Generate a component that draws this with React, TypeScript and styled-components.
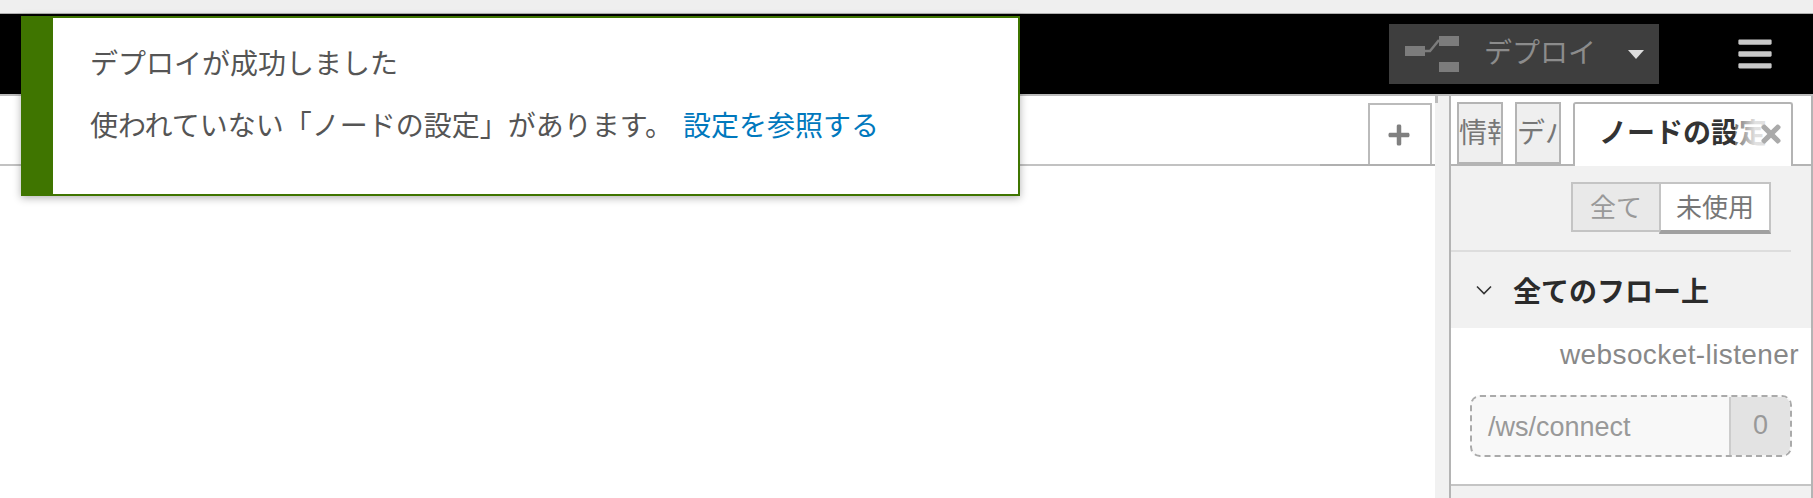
import { createGlobalStyle } from "styled-components";
import styled from "styled-components";
import { FaBars, FaPlus, FaTimes } from "react-icons/fa";

const GlobalStyle = createGlobalStyle`
  html, body {
    margin: 0;
    padding: 0;
    background: #ffffff;
  }
  body {
    font-family: "Liberation Sans", "Noto Sans CJK JP", sans-serif;
    font-size: 28px;
    color: #555555;
  }
  * {
    box-sizing: border-box;
  }
`;

const Page = styled.div`
  position: relative;
  display: flex;
  flex-direction: column;
  width: 1813px;
  height: 498px;
  overflow: hidden;
`;

const TopStrip = styled.div`
  height: 14px;
  flex: none;
  background: #efefef;
  border-bottom: 1px solid #b0b0b0;
`;

const Header = styled.header`
  flex: none;
  display: flex;
  align-items: center;
  justify-content: flex-end;
  height: 82px;
  padding: 0 39px 0 0;
  background: #000000;
  border-bottom: 2px solid #bbbbbb;
`;

const DeployButton = styled.div`
  display: flex;
  align-items: center;
  width: 270px;
  height: 60px;
  margin-right: 77px;
  padding-left: 16px;
  background: #3e3e3e;
  color: #8c8c8c;
  line-height: 60px;
`;

const DeployIcon = styled.svg`
  width: 54px;
  height: 36px;
  margin-right: 25px;
  flex: none;
`;

const DeployLabel = styled.span`
  width: 112px;
  flex: none;
`;

const DeployCaret = styled.span`
  width: 0;
  height: 0;
  margin: 0 0 0 32px;
  border-left: 8px solid transparent;
  border-right: 8px solid transparent;
  border-top: 9px solid #dddddd;
`;

const MenuButton = styled.div`
  display: flex;
  color: #c8c8c8;
  font-size: 38px;
`;

const Main = styled.main`
  flex: 1;
  display: flex;
  min-height: 0;
`;

const Workspace = styled.section`
  flex: none;
  width: 1435px;
`;

const WorkspaceTabs = styled.div`
  display: flex;
  justify-content: flex-end;
  height: 70px;
  padding: 7px 3px 0 0;
  border-bottom: 2px solid;
  border-image: linear-gradient(to right, #c2c2c2 1319px, #b0b0b0 1319px) 1;
`;

const AddTab = styled.div`
  display: flex;
  align-items: center;
  justify-content: center;
  width: 64px;
  padding-right: 2px;
  border: 2px solid #bbbbbb;
  border-bottom: none;
  color: #808080;
  font-size: 24px;
`;

const Gutter = styled.div`
  flex: none;
  width: 14px;
  background: #f1f1f1;
`;

const GutterTop = styled.div`
  height: 7px;
  border-left: 3px solid #bbbbbb;
`;

const Sidebar = styled.aside`
  flex: 1;
  display: flex;
  flex-direction: column;
  border-left: 2px solid #b4b4b4;
  border-right: 2px solid #b4b4b4;
  background: #f1f1f1;
`;

const SidebarTabs = styled.div`
  position: relative;
  display: flex;
  flex: none;
  height: 70px;
  padding: 6px 0 0 6px;
  background: #ffffff;
  border-bottom: 2px solid #b4b4b4;
`;

const SideTab = styled.div<{ $active?: boolean; $width: number }>`
  width: ${(p) => p.$width}px;
  height: ${(p) => (p.$active ? "64px" : "62px")};
  margin-right: 12px;
  padding-left: ${(p) => (p.$active ? "24px" : "0")};
  overflow: hidden;
  white-space: nowrap;
  line-height: 59px;
  border: 2px solid #b4b4b4;
  border-bottom: ${(p) => (p.$active ? "none" : "2px solid #b4b4b4")};
  border-radius: ${(p) => (p.$active ? "3px 3px 0 0" : "0")};
  background: ${(p) => (p.$active ? "#ffffff" : "#efefef")};
  color: ${(p) => (p.$active ? "#333333" : "#777777")};
  font-weight: ${(p) => (p.$active ? 700 : 400)};
`;

const TabClose = styled.div`
  position: absolute;
  top: 22px;
  right: 26px;
  display: flex;
  align-items: center;
  justify-content: flex-end;
  width: 50px;
  height: 32px;
  background: linear-gradient(to right, rgba(255, 255, 255, 0.3), rgba(255, 255, 255, 0.85) 40%);
  color: #aaaaaa;
  font-size: 28px;
`;

const FilterBar = styled.div`
  flex: none;
  display: flex;
  justify-content: flex-end;
  height: 86px;
  margin-right: 20px;
  padding: 16px 20px 0 0;
  border-bottom: 2px solid #dddddd;
`;

const FilterButton = styled.div<{ $selected?: boolean }>`
  display: flex;
  align-items: center;
  justify-content: center;
  height: ${(p) => (p.$selected ? "52px" : "50px")};
  width: ${(p) => (p.$selected ? "112px" : "88px")};
  padding-bottom: 4px;
  font-size: 26px;
  color: ${(p) => (p.$selected ? "#777777" : "#999999")};
  background: ${(p) => (p.$selected ? "#ffffff" : "#e9e9e9")};
  border: 2px solid #c4c4c4;
  border-right-width: ${(p) => (p.$selected ? "2px" : "0")};
  border-bottom: ${(p) => (p.$selected ? "4px solid #a0a0a0" : "2px solid #c4c4c4")};
`;

const SectionHeader = styled.div`
  flex: none;
  display: flex;
  align-items: center;
  gap: 21px;
  height: 76px;
  padding-left: 25px;
  color: #2b2b2b;
  font-weight: 700;
`;

const Chevron = styled.svg`
  width: 16px;
  height: 10px;
  flex: none;
`;

const SectionBody = styled.div`
  flex: none;
  display: flex;
  flex-direction: column;
  height: 158px;
  padding: 10px 12px 0 19px;
  background: #ffffff;
  border-bottom: 2px solid #c4c4c4;
`;

const NodeType = styled.div`
  text-align: right;
  font-size: 28px;
  letter-spacing: 0.4px;
  line-height: 34px;
  color: #888888;
`;

const ConfigNode = styled.div`
  display: flex;
  height: 62px;
  width: 322px;
  margin-top: 23px;
  border: 2px dashed #aaaaaa;
  border-radius: 10px;
  background: #f8f8f8;
  overflow: hidden;
  font-size: 27px;
  color: #999999;
`;

const ConfigLabel = styled.div`
  flex: 1;
  padding-left: 16px;
  line-height: 60px;
`;

const ConfigCount = styled.div`
  width: 61px;
  text-align: center;
  line-height: 56px;
  background: #e3e3e3;
  border-left: 2px solid #cccccc;
`;

const Notification = styled.div`
  position: absolute;
  top: 16px;
  left: 21px;
  width: 999px;
  height: 180px;
  padding: 26px 0 0 37px;
  background: #ffffff;
  border: 2px solid #3f7500;
  border-left-width: 32px;
  box-shadow: 0 2px 8px rgba(0, 0, 0, 0.3);
`;

const NoticeLine = styled.p`
  margin: 0 0 20px;
  line-height: 42px;
  color: #555555;
`;

const NoticeLink = styled.a`
  margin-left: 10px;
  color: #0078bd;
`;

export default function App() {
  return (
    <Page>
      <GlobalStyle />
      <TopStrip />
      <Header>
        <DeployButton>
          <DeployIcon viewBox="0 0 54 36">
            <rect x="0" y="10" width="20" height="10" fill="#7c7c7c" />
            <rect x="34" y="0" width="20" height="10" fill="#7c7c7c" />
            <rect x="34" y="26" width="20" height="10" fill="#7c7c7c" />
            <path d="M20 15 L25 15 L34 4" stroke="#7c7c7c" strokeWidth="2.5" fill="none" />
          </DeployIcon>
          <DeployLabel>デプロイ</DeployLabel>
          <DeployCaret />
        </DeployButton>
        <MenuButton>
          <FaBars />
        </MenuButton>
      </Header>
      <Main>
        <Workspace>
          <WorkspaceTabs>
            <AddTab>
              <FaPlus />
            </AddTab>
          </WorkspaceTabs>
        </Workspace>
        <Gutter>
          <GutterTop />
        </Gutter>
        <Sidebar>
          <SidebarTabs>
            <SideTab $width={46}>情報</SideTab>
            <SideTab $width={46}>デバッグ</SideTab>
            <SideTab $active $width={220}>
              ノードの設定
            </SideTab>
            <TabClose>
              <FaTimes />
            </TabClose>
          </SidebarTabs>
          <FilterBar>
            <FilterButton>全て</FilterButton>
            <FilterButton $selected>未使用</FilterButton>
          </FilterBar>
          <SectionHeader>
            <Chevron viewBox="0 0 16 10">
              <path d="M1 1.5 L8 8.5 L15 1.5" stroke="#333333" strokeWidth="1.6" fill="none" />
            </Chevron>
            全てのフロー上
          </SectionHeader>
          <SectionBody>
            <NodeType>websocket-listener</NodeType>
            <ConfigNode>
              <ConfigLabel>/ws/connect</ConfigLabel>
              <ConfigCount>0</ConfigCount>
            </ConfigNode>
          </SectionBody>
        </Sidebar>
      </Main>
      <Notification>
        <NoticeLine>デプロイが成功しました</NoticeLine>
        <NoticeLine>
          使われていない「ノードの設定」があります。
          <NoticeLink>設定を参照する</NoticeLink>
        </NoticeLine>
      </Notification>
    </Page>
  );
}
